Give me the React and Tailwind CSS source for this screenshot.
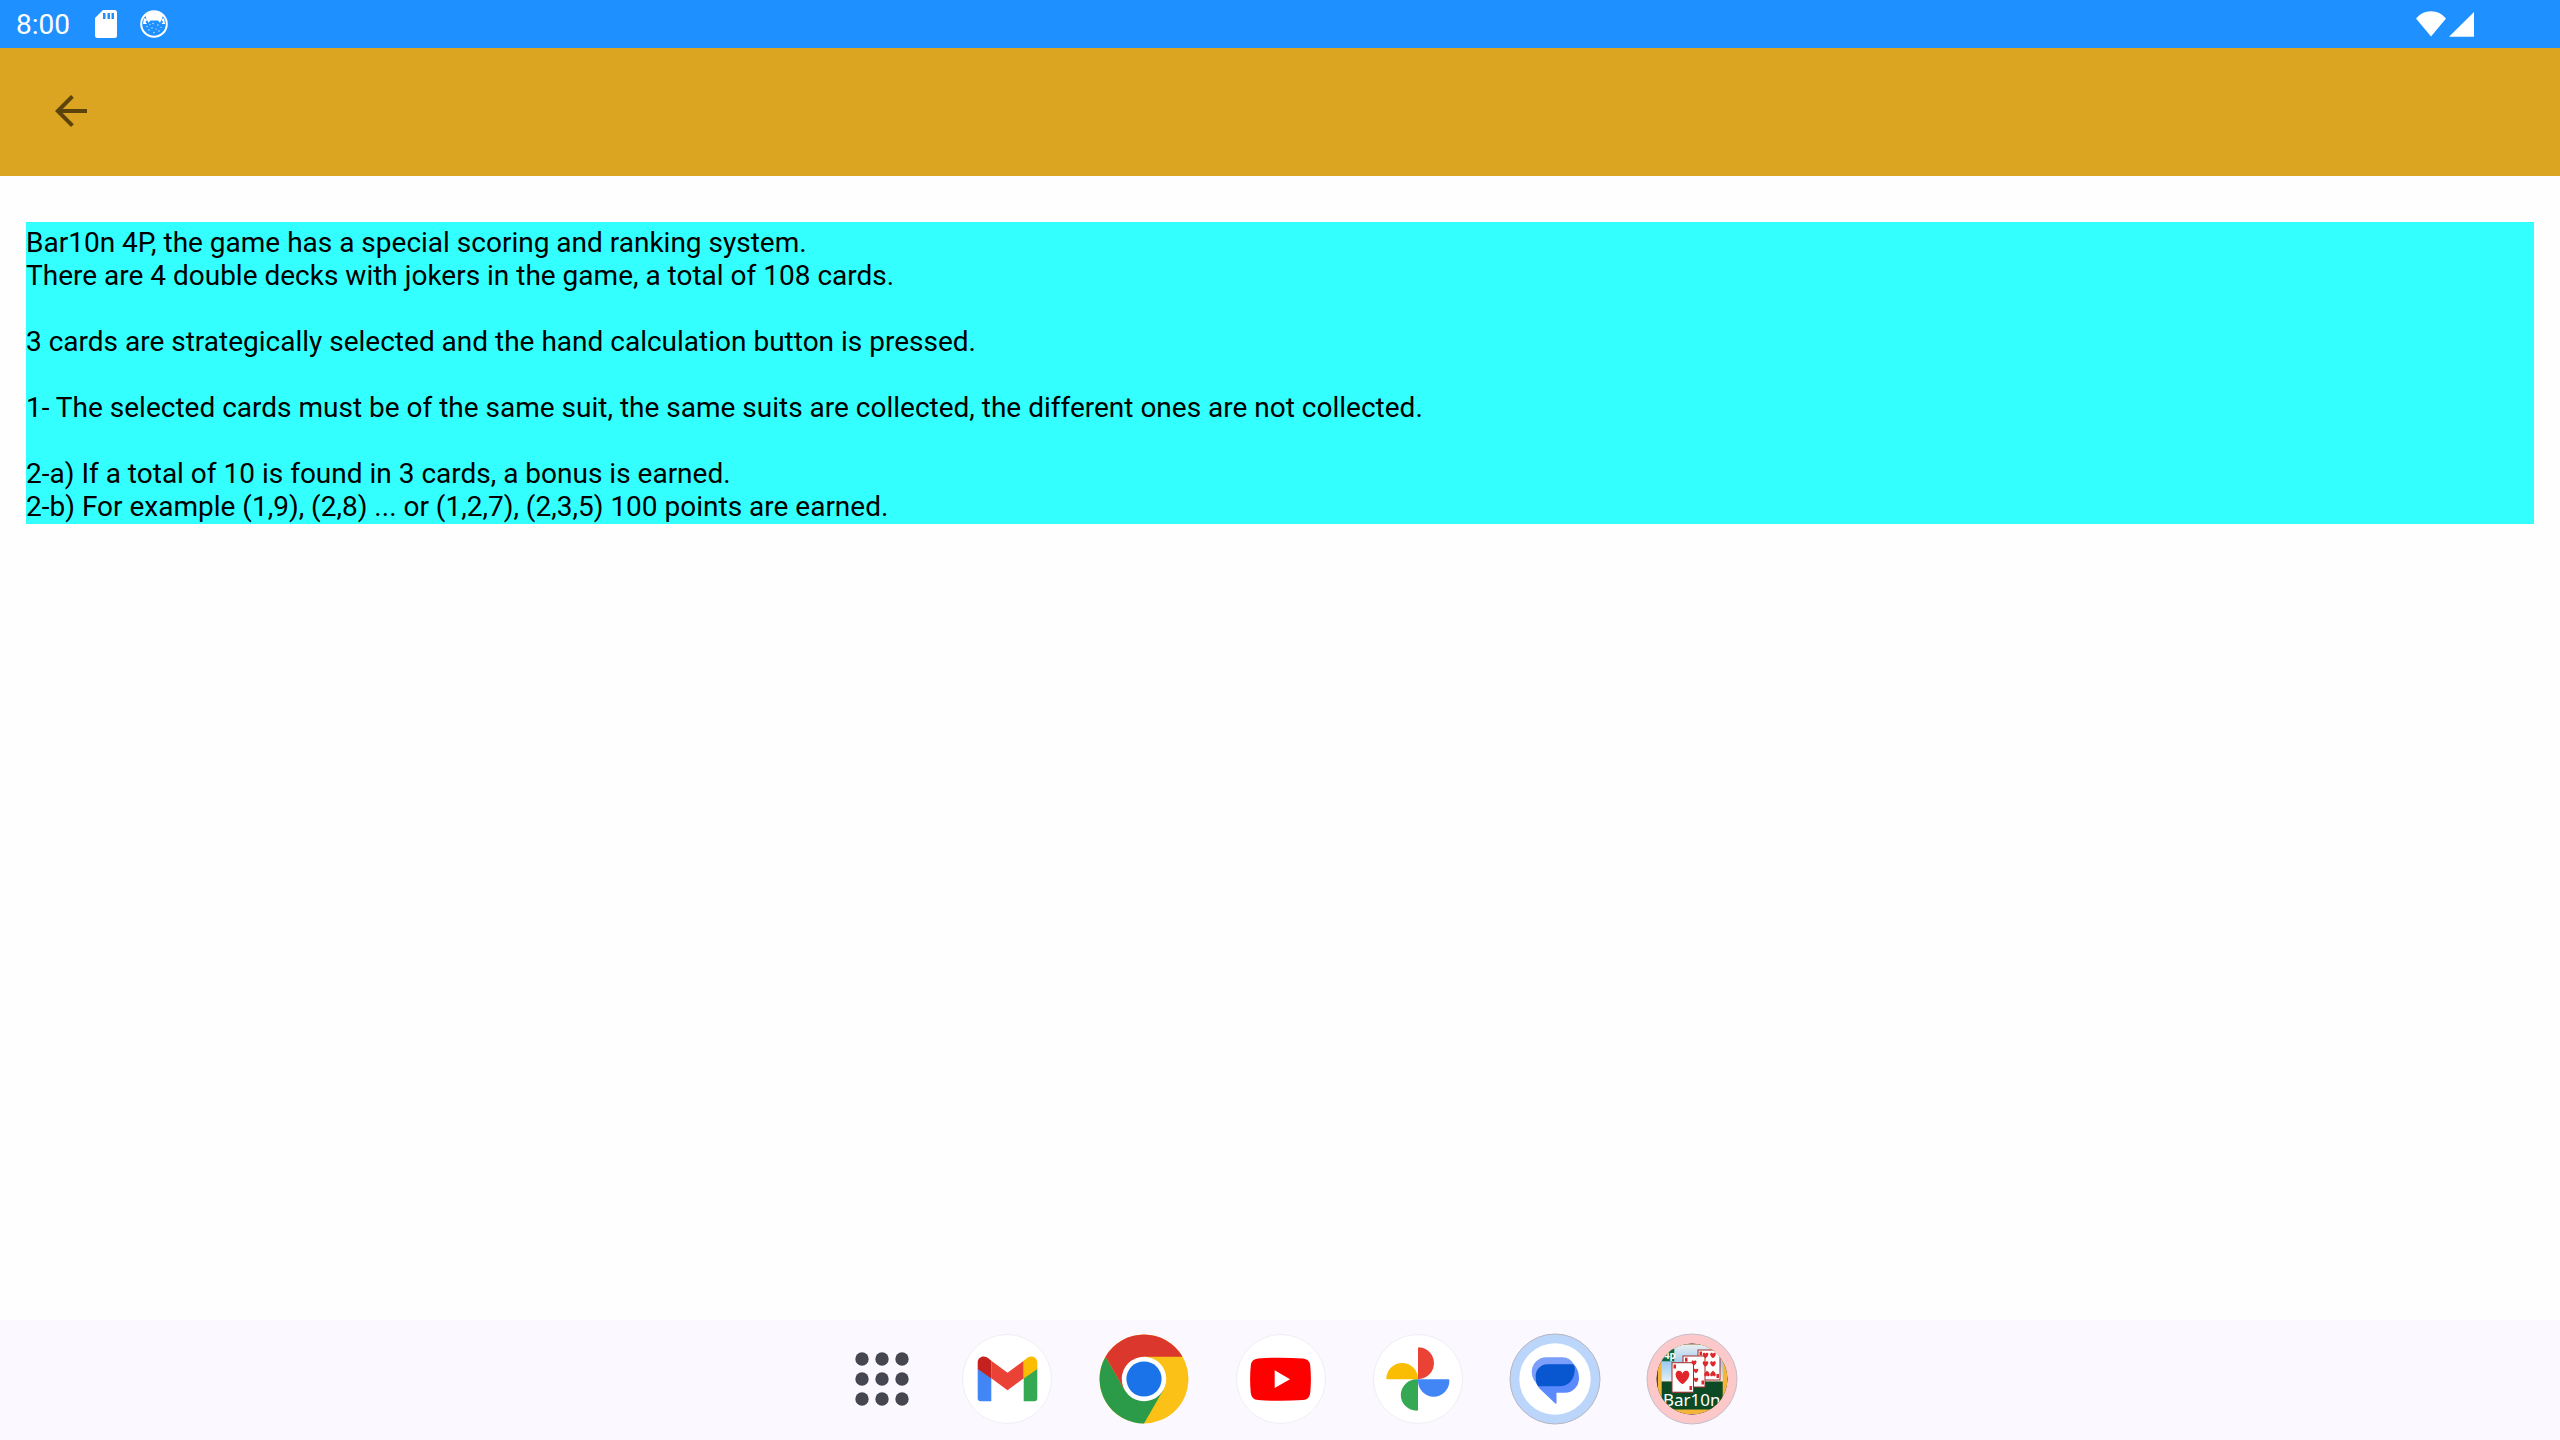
const RULES = [
  'Bar10n 4P, the game has a special scoring and ranking system.',
  'There are 4 double decks with jokers in the game, a total of 108 cards.',
  '',
  '3 cards are strategically selected and the hand calculation button is pressed.',
  '',
  '1- The selected cards must be of the same suit, the same suits are collected, the different ones are not collected.',
  '',
  '2-a) If a total of 10 is found in 3 cards, a bonus is earned.',
  '2-b) For example (1,9), (2,8) ... or (1,2,7), (2,3,5) 100 points are earned.',
].join('\n')

const HEART = 'M0 5C-7 0-5.5-5-2.8-5C-1.2-5 0-3.8 0-2.6C0-3.8 1.2-5 2.8-5C5.5-5 7 0 0 5Z'

function SdCardIcon() {
  return (
    <svg className="w-[22px] h-7" viewBox="0 0 22 28" fill="#fff">
      <path fillRule="evenodd" d="M8 0H19.500Q22 0 22 2.500V25.500Q22 28 19.500 28H2.500Q0 28 0 25.500V8ZM8 3V9H10.500V3ZM12.500 3V9H15V3ZM16.500 3V9H19V3Z" />
    </svg>
  )
}

function CatIcon() {
  return (
    <svg className="size-7" viewBox="0 0 28 28">
      <circle cx="14" cy="14" r="12.800" fill="none" stroke="#fff" strokeWidth="2" />
      <path d="M5 5Q14-2 23 5L22 9L20 12.800L18 10.500H10.500L8.500 12.800L6.500 9Z" fill="#fff" />
      <path d="M4 8L7.500 9.500L5.500 12L7 14L3 14ZM24 8L21.500 9.500L23 12L21.500 14L25 14Z" fill="#fff" />
      <g fill="#fff" opacity="0.85">
        <circle cx="7" cy="16.500" r="0.700" />
        <circle cx="10" cy="14.500" r="0.600" />
        <circle cx="13" cy="13.500" r="0.700" />
        <circle cx="18" cy="15" r="0.700" />
        <circle cx="21" cy="17.500" r="0.600" />
        <circle cx="9" cy="20" r="0.700" />
        <circle cx="12" cy="18" r="0.700" />
        <circle cx="16" cy="19" r="0.600" />
        <circle cx="19" cy="21" r="0.700" />
        <circle cx="14" cy="22.500" r="0.700" />
      </g>
    </svg>
  )
}

function StatusBar() {
  return (
    <header className="h-12 px-4 bg-[#1e90ff] flex items-center justify-between text-white">
      <div className="flex items-center">
        <time className="w-[79px] pt-0.5 text-[28px] leading-8">8:00</time>
        <SdCardIcon />
        <div className="ml-[23px]">
          <CatIcon />
        </div>
      </div>
      <svg className="w-[58px] h-[26px] mr-[70px]" viewBox="0 0 58 26" fill="#fff">
        <path d="M0 7.500Q6 0.300 15 0.300T30 7.500L15 25.500Z" />
        <path d="M33 25.700L58 1V25.700Z" />
      </svg>
    </header>
  )
}

function GmailIcon() {
  return (
    <svg className="size-[92px]" viewBox="0 0 92 92">
      <circle cx="46" cy="46" r="44.500" fill="#fff" stroke="#f0eef4" />
      <path d="M16.700 35.500L30.300 45V68.300H19.700Q16.700 68.300 16.700 65.300Z" fill="#4285f4" />
      <path d="M76.300 35.500L62.700 45V68.300H73.300Q76.300 68.300 76.300 65.300Z" fill="#34a853" />
      <path d="M30.300 27.700L46.500 39.700L62.700 27.700V45.300L46.500 57.300L30.300 45.300Z" fill="#ea4335" />
      <path d="M16.700 36V29.500C16.700 23.500 23.500 21.500 27.700 25.600L30.300 27.700V45.500Z" fill="#c5221f" />
      <path d="M76.300 36V29.500C76.300 23.500 69.500 21.500 65.300 25.600L62.700 27.700V45.500Z" fill="#fbbc04" />
    </svg>
  )
}

function ChromeIcon() {
  return (
    <svg className="size-[92px]" viewBox="0 0 92 92">
      <circle cx="46" cy="46" r="44.500" fill="#fbc116" />
      <path d="M46 90.500A44.500 44.500 0 0 1 7.500 23.750L26.700 57.100L46 60L65.300 57.100Z" fill="#2b9b4a" />
      <path d="M7.500 23.750A44.500 44.500 0 0 1 84.500 23.750H46V46L26.700 57.100Z" fill="#dc372c" />
      <circle cx="46" cy="46" r="22.250" fill="#fff" />
      <circle cx="46" cy="46" r="17.600" fill="#1a73e8" />
    </svg>
  )
}

function YoutubeIcon() {
  return (
    <svg className="size-[92px]" viewBox="0 0 92 92">
      <circle cx="46" cy="46" r="44.500" fill="#fff" stroke="#f0eef4" />
      <path d="M23 25.500Q45.500 23.800 68 25.500Q74.500 26 75.200 32.500Q76.600 46 75.200 60Q74.500 66.500 68 67Q45.500 68.600 23 67Q16.500 66.500 15.800 60Q14.400 46 15.800 32.500Q16.500 26 23 25.500Z" fill="#f00" />
      <path d="M39.700 37.300L55 46.200L39.700 55Z" fill="#fff" />
    </svg>
  )
}

function PhotosIcon() {
  return (
    <svg className="size-[92px]" viewBox="0 0 92 92">
      <circle cx="46" cy="46" r="44.500" fill="#fff" stroke="#f0eef4" />
      <path d="M46 46V15.500Q46 14.300 47.200 14.300A16 15.900 0 0 1 47.200 46Z" fill="#ea4335" />
      <path d="M46 46.300H15.500Q14.300 46.300 14.300 45A15.900 16.300 0 0 1 46 45Z" fill="#fbbc04" />
      <path d="M46 46.300V76.500Q46 77.700 44.800 77.700A16 15.700 0 0 1 44.800 46.300Z" fill="#34a853" />
      <path d="M46 46.300H76.200Q77.400 46.300 77.400 47.500A15.700 16.200 0 0 1 46 47.500Z" fill="#4285f4" />
    </svg>
  )
}

function MessagesIcon() {
  return (
    <svg className="size-[92px]" viewBox="0 0 92 92">
      <circle cx="46" cy="46" r="45" fill="#bcd6fb" stroke="#b3b5bf" />
      <circle cx="46" cy="46" r="35.700" fill="#fff" />
      <path d="M37.500 24.300H53.500Q61 24.300 65 31.500V53.300H31Q22.700 47.500 22.700 39A14.700 14.700 0 0 1 37.500 24.300Z" fill="#7c9ffb" />
      <path d="M38 31.300H65Q70 37 70 45.500A14.200 14.200 0 0 1 56 59.700H47.500V69.500Q47.500 71.500 46 70.200L31 56Q26.700 52 26.700 43A11.700 11.700 0 0 1 38 31.300Z" fill="#5b8afc" />
      <path d="M38.500 31.300H62.500Q65.800 31.300 65.800 36C65.800 46 60 53.300 50.500 53.300H30.500Q26.700 53.300 26.700 43A11.800 11.800 0 0 1 38.500 31.300Z" fill="#0957d0" />
    </svg>
  )
}

function Bar10nIcon() {
  return (
    <svg className="size-[92px]" viewBox="0 0 92 92">
      <defs>
        <clipPath id="bar10n-clip">
          <circle cx="46" cy="46" r="35.500" />
        </clipPath>
        <linearGradient id="bar10n-sky" x1="0" y1="0" x2="0" y2="1">
          <stop offset="0" stopColor="#e9eef0" />
          <stop offset="0.500" stopColor="#9fcdf0" />
          <stop offset="1" stopColor="#e4eff6" />
        </linearGradient>
      </defs>
      <circle cx="46" cy="46" r="45" fill="#fdc8ca" stroke="#c3bfca" />
      <g clipPath="url(#bar10n-clip)">
        <rect width="92" height="92" fill="#1b1a12" />
        <rect x="11.700" y="11.500" width="69.300" height="69.500" fill="#f5b53a" />
        <rect x="15.700" y="11.500" width="61" height="37" fill="url(#bar10n-sky)" />
        <rect x="15.700" y="48.500" width="61" height="28" fill="#0c4a26" />
        <rect x="15.700" y="16" width="12.600" height="12.300" fill="#0d6a3c" />
        <text x="18" y="26" fontSize="10" fontWeight="700" fill="#fff" className="font-['Roboto',sans-serif]">4p</text>
        <g fill="#fff" stroke="#a52a2a">
          <rect x="52" y="17" width="22" height="30" />
          <rect x="37" y="23" width="22" height="31" />
          <rect x="26" y="29.700" width="21.500" height="29.500" />
        </g>
        <g fill="#e0252b">
          <path d={HEART} transform="translate(36.500 44.500) scale(1.350)" />
          <path d={HEART} transform="translate(48 30) scale(0.500)" />
          <path d={HEART} transform="translate(50 38) scale(0.450)" />
          <path d={HEART} transform="translate(50 47) scale(0.450)" />
          <path d={HEART} transform="translate(59.500 22.500) scale(0.550)" />
          <path d={HEART} transform="translate(67 22.500) scale(0.550)" />
          <path d={HEART} transform="translate(59.500 31) scale(0.550)" />
          <path d={HEART} transform="translate(67 31) scale(0.550)" />
          <path d={HEART} transform="translate(61 40.500) scale(0.550 -0.550)" />
          <path d={HEART} transform="translate(67 40.500) scale(0.550 -0.550)" />
          <rect x="27.500" y="31.500" width="2.500" height="4" />
          <rect x="43.500" y="53" width="2.500" height="4" />
          <rect x="39" y="24.700" width="2.500" height="4" />
          <rect x="55.500" y="47.500" width="2.500" height="4" />
          <rect x="53.500" y="18.500" width="2.500" height="4" />
          <rect x="70.500" y="41" width="2.500" height="4" />
        </g>
        <text x="17" y="72.500" fontSize="17" fill="#fff" className="font-['Noto_Sans',sans-serif]">Bar10n</text>
      </g>
    </svg>
  )
}

const APPS = [
  { name: 'Gmail', Icon: GmailIcon },
  { name: 'Chrome', Icon: ChromeIcon },
  { name: 'YouTube', Icon: YoutubeIcon },
  { name: 'Photos', Icon: PhotosIcon },
  { name: 'Messages', Icon: MessagesIcon },
  { name: 'Bar10n', Icon: Bar10nIcon },
]

function Taskbar() {
  return (
    <nav className="h-[120px] pb-0.5 bg-[#fbf9ff] flex items-center justify-center gap-5">
      <button aria-label="All apps" className="w-[119px] h-[92px] flex items-center justify-center">
        <svg className="size-[54px]" viewBox="0 0 54 54" fill="#45464f">
          {[7, 27, 47].map(y => [7, 27, 47].map(x => <circle key={`${x}-${y}`} cx={x} cy={y} r="6.700" />))}
        </svg>
      </button>
      <div className="flex gap-[45px]">
        {APPS.map(({ name, Icon }) => (
          <button key={name} aria-label={name} className="rounded-full">
            <Icon />
          </button>
        ))}
      </div>
    </nav>
  )
}

export default function App() {
  return (
    <div className="min-h-screen bg-[#fffeff] flex flex-col font-['Roboto',sans-serif]">
      <StatusBar />

      {/* App bar */}
      <div className="h-32 px-[47px] pb-0.5 bg-[#dba421] flex items-center">
        <button aria-label="Back">
          <svg className="size-12" viewBox="0 0 24 24" fill="#5c430c">
            <path d="M20 11H7.830l5.590-5.590L12 4l-8 8 8 8 1.410-1.410L7.830 13H20v-2z" />
          </svg>
        </button>
      </div>

      {/* Game rules */}
      <main className="flex-1 px-[26px] pt-[46px]">
        <p className="pt-1 pb-px bg-[#33ffff] text-black text-[28px] leading-[33px] whitespace-pre-wrap">{RULES}</p>
      </main>

      <Taskbar />
    </div>
  )
}
